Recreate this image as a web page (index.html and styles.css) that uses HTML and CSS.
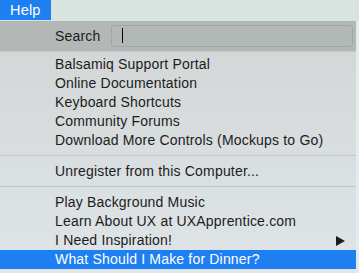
FILE: index.html
```html
<!DOCTYPE html>
<html>
<head>
<meta charset="utf-8">
<link rel="stylesheet" href="styles.css">
</head>
<body>
<div class="menubar"><span class="menutitle">Help</span></div>
<div class="menu">
  <div class="search-row">
    <span class="search-label">Search</span>
    <div class="search-field"><span class="caret"></span></div>
  </div>
  <div class="group first">
    <div class="item">Balsamiq Support Portal</div>
    <div class="item">Online Documentation</div>
    <div class="item">Keyboard Shortcuts</div>
    <div class="item">Community Forums</div>
    <div class="item">Download More Controls (Mockups to Go)</div>
  </div>
  <div class="sep"></div>
  <div class="group">
    <div class="item">Unregister from this Computer...</div>
  </div>
  <div class="sep"></div>
  <div class="group">
    <div class="item">Play Background Music</div>
    <div class="item">Learn About UX at UXApprentice.com</div>
    <div class="item has-sub">I Need Inspiration!<span class="arrow"></span></div>
    <div class="item selected">What Should I Make for Dinner?</div>
  </div>
</div>
</body>
</html>
```
FILE: styles.css
```css
html, body {
  margin: 0;
  padding: 0;
}
body {
  width: 359px;
  height: 273px;
  overflow: hidden;
  background: #e4ebee;
  font-family: "Liberation Sans", Arial, sans-serif;
  font-size: 14px;
  letter-spacing: 0.18px;
  color: #1c1c1c;
}
.menubar {
  height: 21px;
  background: #d8e4e0;
  display: flex;
}
.menutitle {
  background: #1d7ff1;
  color: #fff;
  padding: 0 10px;
  line-height: 20px;
  height: 20px;
  font-size: 14.5px;
}
.menu {
  width: 356px;
  background: linear-gradient(#d2d5d5, #dfe5e8);
  border-radius: 0 0 5px 5px;
  overflow: hidden;
  padding-bottom: 5px;
}
.search-row {
  height: 30px;
  background: #b3b8b6;
  display: flex;
  align-items: center;
  border-bottom: 1px solid #c4c7c7;
}
.search-label {
  margin-left: 55px;
  width: 56px;
}
.search-field {
  width: 240px;
  height: 20px;
  border: 1px solid #a2a7a5;
  border-radius: 3px;
  background: #b2b8b5;
  margin-top: -1px;
  display: flex;
  align-items: center;
}
.caret {
  width: 1px;
  height: 15px;
  background: #000;
  margin-left: 10px;
}
.group.first {
  padding-top: 3px;
}
.item {
  height: 19px;
  line-height: 19px;
  padding-left: 55px;
  display: flex;
  align-items: center;
  white-space: nowrap;
}
.has-sub {
  justify-content: space-between;
  padding-right: 11px;
}
.arrow {
  width: 0;
  height: 0;
  border-top: 5px solid transparent;
  border-bottom: 5px solid transparent;
  border-left: 9px solid #1c1c1c;
}
.selected {
  background: #1d7ff1;
  color: #fff;
}
.sep {
  height: 1px;
  background: #c3c7c8;
  margin: 5px 0 6px;
}
```
